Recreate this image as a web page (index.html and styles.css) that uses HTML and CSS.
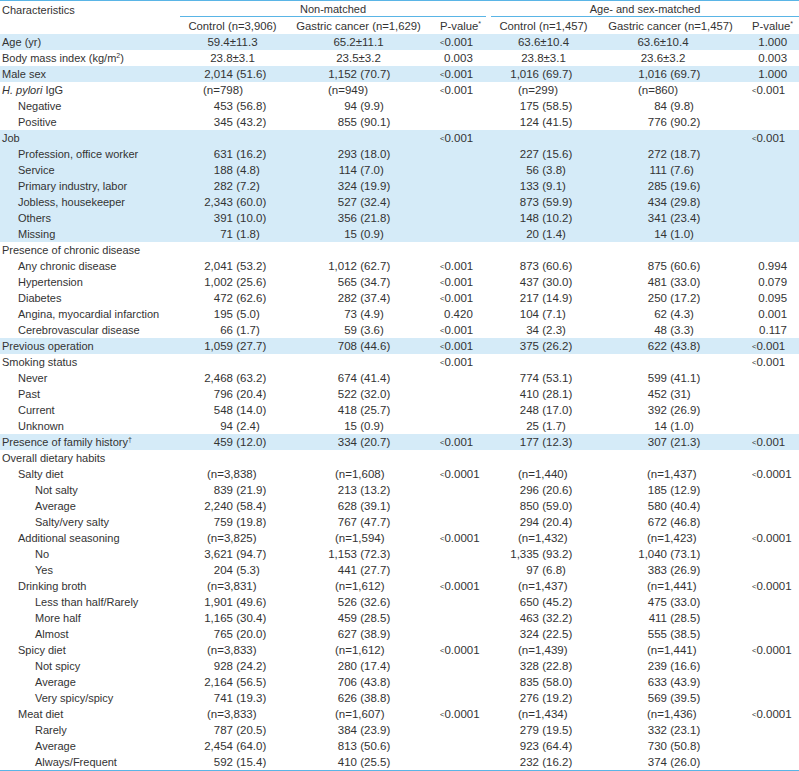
FILE: index.html
```html
<!DOCTYPE html>
<html lang="en">
<head>
<meta charset="utf-8">
<title>Characteristics table</title>
<link rel="stylesheet" href="styles.css">
</head>
<body>
<table class="tbl">
  <colgroup>
    <col class="w0"><col class="w1"><col class="w2"><col class="w3"><col class="w4"><col class="w5"><col class="w6">
  </colgroup>
  <thead>
    <tr class="h1">
      <th class="lab">Characteristics</th>
      <th colspan="3" class="grp"><div class="ul ul-a">Non-matched</div></th>
      <th colspan="3" class="grp"><div class="ul ul-b">Age- and sex-matched</div></th>
    </tr>
    <tr class="h2">
      <th></th>
      <th class="hc">Control (n=3,906)</th>
      <th class="hc">Gastric cancer (n=1,629)</th>
      <th class="hp">P-value<sup>*</sup></th>
      <th class="hc">Control (n=1,457)</th>
      <th class="hc">Gastric cancer (n=1,457)</th>
      <th class="hp">P-value<sup>*</sup></th>
    </tr>
  </thead>
  <tbody>
    <tr class="hl"><td class="l0">Age (yr)</td><td class="pm">59.4±11.3</td><td class="pm">65.2±11.1</td><td class="pv"><span class="lt">&lt;</span>0.001</td><td class="pm">63.6±10.4</td><td class="pm">63.6±10.4</td><td class="pv x">1.000</td></tr>
    <tr><td class="l0">Body mass index (kg/m<sup>2</sup>)</td><td class="pm">23.8±3.1</td><td class="pm">23.5±3.2</td><td class="pv x">0.003</td><td class="pm">23.8±3.1</td><td class="pm">23.6±3.2</td><td class="pv x">0.003</td></tr>
    <tr class="hl"><td class="l0">Male sex</td><td><span class="a">2,014</span> (51.6)</td><td><span class="a">1,152</span> (70.7)</td><td class="pv"><span class="lt">&lt;</span>0.001</td><td><span class="a">1,016</span> (69.7)</td><td><span class="a">1,016</span> (69.7)</td><td class="pv x">1.000</td></tr>
    <tr><td class="l0"><i>H. pylori</i> IgG</td><td class="nn hpy">(n=798)</td><td class="nn hpy">(n=949)</td><td class="pv"><span class="lt">&lt;</span>0.001</td><td class="nn hpy">(n=299)</td><td class="nn hpy">(n=860)</td><td class="pv"><span class="lt">&lt;</span>0.001</td></tr>
    <tr><td class="l1">Negative</td><td><span class="a">453</span> (56.8)</td><td><span class="a">94</span> (9.9)</td><td></td><td><span class="a">175</span> (58.5)</td><td><span class="a">84</span> (9.8)</td><td></td></tr>
    <tr><td class="l1">Positive</td><td><span class="a">345</span> (43.2)</td><td><span class="a">855</span> (90.1)</td><td></td><td><span class="a">124</span> (41.5)</td><td><span class="a">776</span> (90.2)</td><td></td></tr>
    <tr class="hl"><td class="l0">Job</td><td></td><td></td><td class="pv"><span class="lt">&lt;</span>0.001</td><td></td><td></td><td class="pv"><span class="lt">&lt;</span>0.001</td></tr>
    <tr class="hl"><td class="l1">Profession, office worker</td><td><span class="a">631</span> (16.2)</td><td><span class="a">293</span> (18.0)</td><td></td><td><span class="a">227</span> (15.6)</td><td><span class="a">272</span> (18.7)</td><td></td></tr>
    <tr class="hl"><td class="l1">Service</td><td><span class="a">188</span> (4.8)</td><td><span class="a">114</span> (7.0)</td><td></td><td><span class="a">56</span> (3.8)</td><td><span class="a">111</span> (7.6)</td><td></td></tr>
    <tr class="hl"><td class="l1">Primary industry, labor</td><td><span class="a">282</span> (7.2)</td><td><span class="a">324</span> (19.9)</td><td></td><td><span class="a">133</span> (9.1)</td><td><span class="a">285</span> (19.6)</td><td></td></tr>
    <tr class="hl"><td class="l1">Jobless, housekeeper</td><td><span class="a">2,343</span> (60.0)</td><td><span class="a">527</span> (32.4)</td><td></td><td><span class="a">873</span> (59.9)</td><td><span class="a">434</span> (29.8)</td><td></td></tr>
    <tr class="hl"><td class="l1">Others</td><td><span class="a">391</span> (10.0)</td><td><span class="a">356</span> (21.8)</td><td></td><td><span class="a">148</span> (10.2)</td><td><span class="a">341</span> (23.4)</td><td></td></tr>
    <tr class="hl"><td class="l1">Missing</td><td><span class="a">71</span> (1.8)</td><td><span class="a">15</span> (0.9)</td><td></td><td><span class="a">20</span> (1.4)</td><td><span class="a">14</span> (1.0)</td><td></td></tr>
    <tr><td class="l0">Presence of chronic disease</td><td></td><td></td><td></td><td></td><td></td><td></td></tr>
    <tr><td class="l1">Any chronic disease</td><td><span class="a">2,041</span> (53.2)</td><td><span class="a">1,012</span> (62.7)</td><td class="pv"><span class="lt">&lt;</span>0.001</td><td><span class="a">873</span> (60.6)</td><td><span class="a">875</span> (60.6)</td><td class="pv x">0.994</td></tr>
    <tr><td class="l1">Hypertension</td><td><span class="a">1,002</span> (25.6)</td><td><span class="a">565</span> (34.7)</td><td class="pv"><span class="lt">&lt;</span>0.001</td><td><span class="a">437</span> (30.0)</td><td><span class="a">481</span> (33.0)</td><td class="pv x">0.079</td></tr>
    <tr><td class="l1">Diabetes</td><td><span class="a">472</span> (62.6)</td><td><span class="a">282</span> (37.4)</td><td class="pv"><span class="lt">&lt;</span>0.001</td><td><span class="a">217</span> (14.9)</td><td><span class="a">250</span> (17.2)</td><td class="pv x">0.095</td></tr>
    <tr><td class="l1">Angina, myocardial infarction</td><td><span class="a">195</span> (5.0)</td><td><span class="a">73</span> (4.9)</td><td class="pv x">0.420</td><td><span class="a">104</span> (7.1)</td><td><span class="a">62</span> (4.3)</td><td class="pv x">0.001</td></tr>
    <tr><td class="l1">Cerebrovascular disease</td><td><span class="a">66</span> (1.7)</td><td><span class="a">59</span> (3.6)</td><td class="pv"><span class="lt">&lt;</span>0.001</td><td><span class="a">34</span> (2.3)</td><td><span class="a">48</span> (3.3)</td><td class="pv x">0.117</td></tr>
    <tr class="hl"><td class="l0">Previous operation</td><td><span class="a">1,059</span> (27.7)</td><td><span class="a">708</span> (44.6)</td><td class="pv"><span class="lt">&lt;</span>0.001</td><td><span class="a">375</span> (26.2)</td><td><span class="a">622</span> (43.8)</td><td class="pv"><span class="lt">&lt;</span>0.001</td></tr>
    <tr><td class="l0">Smoking status</td><td></td><td></td><td class="pv"><span class="lt">&lt;</span>0.001</td><td></td><td></td><td class="pv"><span class="lt">&lt;</span>0.001</td></tr>
    <tr><td class="l1">Never</td><td><span class="a">2,468</span> (63.2)</td><td><span class="a">674</span> (41.4)</td><td></td><td><span class="a">774</span> (53.1)</td><td><span class="a">599</span> (41.1)</td><td></td></tr>
    <tr><td class="l1">Past</td><td><span class="a">796</span> (20.4)</td><td><span class="a">522</span> (32.0)</td><td></td><td><span class="a">410</span> (28.1)</td><td><span class="a">452</span> (31)</td><td></td></tr>
    <tr><td class="l1">Current</td><td><span class="a">548</span> (14.0)</td><td><span class="a">418</span> (25.7)</td><td></td><td><span class="a">248</span> (17.0)</td><td><span class="a">392</span> (26.9)</td><td></td></tr>
    <tr><td class="l1">Unknown</td><td><span class="a">94</span> (2.4)</td><td><span class="a">15</span> (0.9)</td><td></td><td><span class="a">25</span> (1.7)</td><td><span class="a">14</span> (1.0)</td><td></td></tr>
    <tr class="hl"><td class="l0">Presence of family history<sup>†</sup></td><td><span class="a">459</span> (12.0)</td><td><span class="a">334</span> (20.7)</td><td class="pv"><span class="lt">&lt;</span>0.001</td><td><span class="a">177</span> (12.3)</td><td><span class="a">307</span> (21.3)</td><td class="pv"><span class="lt">&lt;</span>0.001</td></tr>
    <tr><td class="l0">Overall dietary habits</td><td></td><td></td><td></td><td></td><td></td><td></td></tr>
    <tr><td class="l1">Salty diet</td><td class="nn">(n=3,838)</td><td class="nn">(n=1,608)</td><td class="pv"><span class="lt">&lt;</span>0.0001</td><td class="nn">(n=1,440)</td><td class="nn">(n=1,437)</td><td class="pv"><span class="lt">&lt;</span>0.0001</td></tr>
    <tr><td class="l2">Not salty</td><td><span class="a">839</span> (21.9)</td><td><span class="a">213</span> (13.2)</td><td></td><td><span class="a">296</span> (20.6)</td><td><span class="a">185</span> (12.9)</td><td></td></tr>
    <tr><td class="l2">Average</td><td><span class="a">2,240</span> (58.4)</td><td><span class="a">628</span> (39.1)</td><td></td><td><span class="a">850</span> (59.0)</td><td><span class="a">580</span> (40.4)</td><td></td></tr>
    <tr><td class="l2">Salty/very salty</td><td><span class="a">759</span> (19.8)</td><td><span class="a">767</span> (47.7)</td><td></td><td><span class="a">294</span> (20.4)</td><td><span class="a">672</span> (46.8)</td><td></td></tr>
    <tr><td class="l1">Additional seasoning</td><td class="nn">(n=3,825)</td><td class="nn">(n=1,594)</td><td class="pv"><span class="lt">&lt;</span>0.0001</td><td class="nn">(n=1,432)</td><td class="nn">(n=1,423)</td><td class="pv"><span class="lt">&lt;</span>0.0001</td></tr>
    <tr><td class="l2">No</td><td><span class="a">3,621</span> (94.7)</td><td><span class="a">1,153</span> (72.3)</td><td></td><td><span class="a">1,335</span> (93.2)</td><td><span class="a">1,040</span> (73.1)</td><td></td></tr>
    <tr><td class="l2">Yes</td><td><span class="a">204</span> (5.3)</td><td><span class="a">441</span> (27.7)</td><td></td><td><span class="a">97</span> (6.8)</td><td><span class="a">383</span> (26.9)</td><td></td></tr>
    <tr><td class="l1">Drinking broth</td><td class="nn">(n=3,831)</td><td class="nn">(n=1,612)</td><td class="pv"><span class="lt">&lt;</span>0.0001</td><td class="nn">(n=1,437)</td><td class="nn">(n=1,441)</td><td class="pv"><span class="lt">&lt;</span>0.0001</td></tr>
    <tr><td class="l2">Less than half/Rarely</td><td><span class="a">1,901</span> (49.6)</td><td><span class="a">526</span> (32.6)</td><td></td><td><span class="a">650</span> (45.2)</td><td><span class="a">475</span> (33.0)</td><td></td></tr>
    <tr><td class="l2">More half</td><td><span class="a">1,165</span> (30.4)</td><td><span class="a">459</span> (28.5)</td><td></td><td><span class="a">463</span> (32.2)</td><td><span class="a">411</span> (28.5)</td><td></td></tr>
    <tr><td class="l2">Almost</td><td><span class="a">765</span> (20.0)</td><td><span class="a">627</span> (38.9)</td><td></td><td><span class="a">324</span> (22.5)</td><td><span class="a">555</span> (38.5)</td><td></td></tr>
    <tr><td class="l1">Spicy diet</td><td class="nn">(n=3,833)</td><td class="nn">(n=1,612)</td><td class="pv"><span class="lt">&lt;</span>0.0001</td><td class="nn">(n=1,439)</td><td class="nn">(n=1,441)</td><td class="pv"><span class="lt">&lt;</span>0.0001</td></tr>
    <tr><td class="l2">Not spicy</td><td><span class="a">928</span> (24.2)</td><td><span class="a">280</span> (17.4)</td><td></td><td><span class="a">328</span> (22.8)</td><td><span class="a">239</span> (16.6)</td><td></td></tr>
    <tr><td class="l2">Average</td><td><span class="a">2,164</span> (56.5)</td><td><span class="a">706</span> (43.8)</td><td></td><td><span class="a">835</span> (58.0)</td><td><span class="a">633</span> (43.9)</td><td></td></tr>
    <tr><td class="l2">Very spicy/spicy</td><td><span class="a">741</span> (19.3)</td><td><span class="a">626</span> (38.8)</td><td></td><td><span class="a">276</span> (19.2)</td><td><span class="a">569</span> (39.5)</td><td></td></tr>
    <tr><td class="l1">Meat diet</td><td class="nn">(n=3,833)</td><td class="nn">(n=1,607)</td><td class="pv"><span class="lt">&lt;</span>0.0001</td><td class="nn">(n=1,434)</td><td class="nn">(n=1,436)</td><td class="pv"><span class="lt">&lt;</span>0.0001</td></tr>
    <tr><td class="l2">Rarely</td><td><span class="a">787</span> (20.5)</td><td><span class="a">384</span> (23.9)</td><td></td><td><span class="a">279</span> (19.5)</td><td><span class="a">332</span> (23.1)</td><td></td></tr>
    <tr><td class="l2">Average</td><td><span class="a">2,454</span> (64.0)</td><td><span class="a">813</span> (50.6)</td><td></td><td><span class="a">923</span> (64.4)</td><td><span class="a">730</span> (50.8)</td><td></td></tr>
    <tr><td class="l2">Always/Frequent</td><td><span class="a">592</span> (15.4)</td><td><span class="a">410</span> (25.5)</td><td></td><td><span class="a">232</span> (16.2)</td><td><span class="a">374</span> (26.0)</td><td></td></tr>
  </tbody>
</table>
</body>
</html>
```

FILE: styles.css
```css
html, body {
  margin: 0;
  padding: 0;
  background: #ffffff;
}

body {
  font-family: "Liberation Sans", Arial, sans-serif;
  color: #333333;
  font-size: 11px;
  line-height: 12px;
}

.tbl {
  width: 799px;
  table-layout: fixed;
  border-collapse: collapse;
  border-top: 1px solid #5ab5e6;
  border-bottom: 2px solid #5ab5e6;
}

.w0 { width: 180px; }
.w1 { width: 105px; }
.w2 { width: 147px; }
.w3 { width: 58px; }
.w4 { width: 107px; }
.w5 { width: 147px; }
.w6 { width: 55px; }

th, td {
  padding: 0;
  font-weight: normal;
  white-space: nowrap;
  vertical-align: middle;
  text-align: left;
  overflow: hidden;
}

/* header */
.h1 th {
  height: 16px;
  line-height: 12px;
  vertical-align: top;
}

.h1 .lab {
  padding-left: 2px;
  padding-top: 3px;
  height: 13px;
}

.grp {
  text-align: center;
}

.ul {
  border-bottom: 1px solid #5ab5e6;
  height: 13px;
  line-height: 12px;
  padding-top: 2px;
}

.ul-a { margin-left: 0; margin-right: 4px; }
.ul-b { margin-left: 1px; margin-right: 0; }

.h2 th {
  height: 17px;
  line-height: 12px;
  font-size: 11.3px;
}

.h2 .hc { text-align: center; }
.h2 .hp { padding-left: 8px; }

sup {
  font-size: 7px;
  line-height: 0;
  vertical-align: 4px;
}

/* body rows */
tbody tr {
  height: 16px;
}

tbody td {
  height: 16px;
  line-height: 12px;
  font-size: 11.5px;
}

tbody tr.hl td {
  background: #d5ebf8;
}

tbody td.l0,
tbody td.l1,
tbody td.l2 {
  font-size: 11px;
}

td.l0 { padding-left: 2px; }
td.l1 { padding-left: 18px; }
td.l2 { padding-left: 35px; }

.a {
  display: inline-block;
  width: 44px;
  text-align: right;
  line-height: 12px;
}

tbody td:nth-child(2) { padding-left: 9px; }
tbody td:nth-child(3) { padding-left: 28px; }
tbody td:nth-child(5) { padding-left: 5px; }
tbody td:nth-child(6) { padding-left: 26px; }

/* mean ± sd cells */
tbody td.pm {
  text-align: center;
  padding-left: 0;
  padding-right: 0;
}

tbody td:nth-child(6).pm { padding-right: 15px; }

/* n= cells */
tbody td:nth-child(2).nn { padding-left: 27px; }
tbody td:nth-child(3).nn { padding-left: 50px; }
tbody td:nth-child(5).nn { padding-left: 28px; }
tbody td:nth-child(6).nn { padding-left: 50px; }

tbody td:nth-child(2).nn.hpy { padding-left: 23px; }
tbody td:nth-child(3).nn.hpy { padding-left: 43px; }
tbody td:nth-child(6).nn.hpy { padding-left: 41px; }

/* p-values */
tbody td.pv { padding-left: 8px; }
tbody td:nth-child(4).pv.x { padding-left: 12px; }
tbody td:nth-child(7).pv.x {
  padding-left: 0;
  padding-right: 12px;
  text-align: right;
}

.lt {
  font-size: 7.5px;
  line-height: 0;
  vertical-align: 1px;
}
```
